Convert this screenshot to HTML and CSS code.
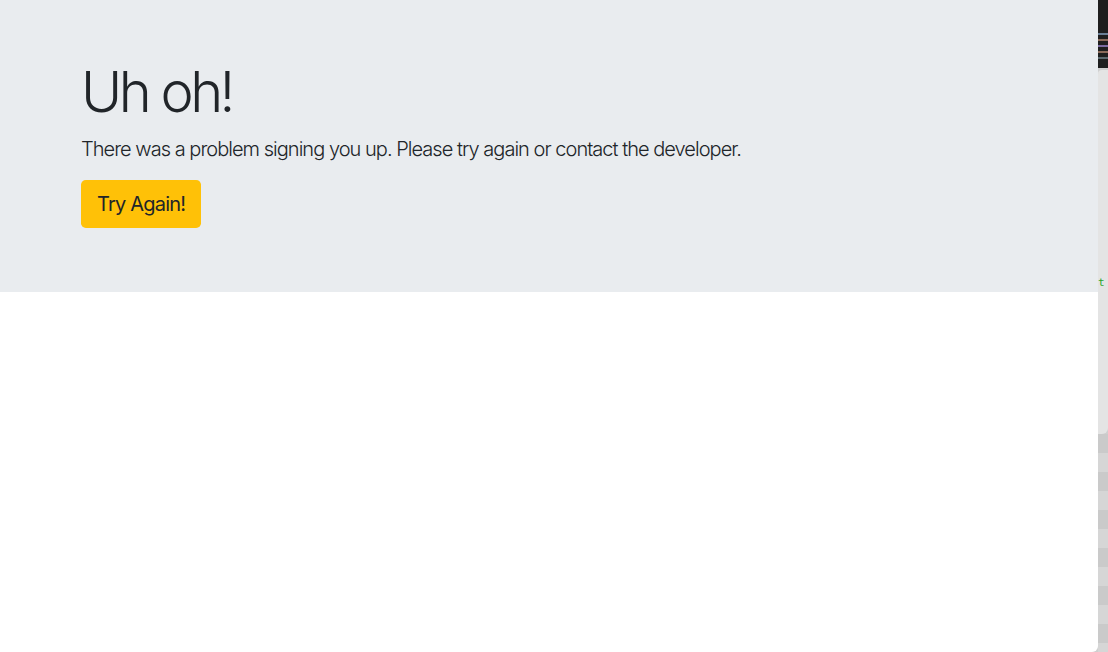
FILE: index.html
```html
<!DOCTYPE html>
<html lang="en">
<head>
<meta charset="utf-8">
<title>Uh oh!</title>
<link rel="stylesheet" href="styles.css">
</head>
<body>
<div class="screen">
  <main class="page">
    <section class="jumbotron">
      <h1 class="display">Uh oh!</h1>
      <p class="lead">There was a problem signing you up. Please try again or contact the developer.</p>
      <a class="btn-warning" href="#">Try Again!</a>
    </section>
  </main>
  <aside class="backdrop">
    <div class="backdrop-top">
      <span class="code-line c1"></span>
      <span class="code-line c2"></span>
      <span class="code-line c3"></span>
      <span class="code-line c4"></span>
      <span class="code-line c5"></span>
    </div>
    <div class="backdrop-panel">
      <span class="green-t">t</span>
    </div>
    <div class="backdrop-rows"></div>
  </aside>
</div>
</body>
</html>
```

FILE: styles.css
```css
* { box-sizing: border-box; }
html, body {
  margin: 0;
  height: 100%;
  overflow: hidden;
}
body {
  font-family: Inter, "Liberation Sans", sans-serif;
  color: #212529;
  background: #cfcfcf;
}
.screen {
  display: flex;
  height: 652px;
}
.page {
  width: 1098px;
  flex: none;
  background: #fff;
  border-bottom-right-radius: 6px;
  overflow: hidden;
}
.jumbotron {
  background: #e9ecef;
  padding: 59px 81px 64px;
}
.display {
  margin: 0 0 8px;
  font-size: 56px;
  font-weight: 300;
  line-height: 1.2;
  letter-spacing: -3.5px;
}
.lead {
  margin: 0 0 16px;
  font-size: 20px;
  font-weight: 300;
  line-height: 30px;
  letter-spacing: -0.97px;
}
.btn-warning {
  display: inline-block;
  background: #ffc107;
  color: #212529;
  text-decoration: none;
  font-size: 20px;
  font-weight: 400;
  line-height: 30px;
  letter-spacing: -0.8px;
  padding: 9px 16px;
  border-radius: 4.8px;
}
.backdrop {
  flex: 1;
  display: flex;
  flex-direction: column;
}
.backdrop-top {
  height: 68px;
  background: #1e1e1e;
  display: flex;
  flex-direction: column;
  gap: 4px;
  padding-top: 33px;
}
.code-line { display: block; height: 2px; width: 10px; }
.c1 { background: #6a7f96; }
.c2 { background: #8a6a5a; }
.c3 { background: #7a6aa0; }
.c4 { background: #8a6a5a; }
.c5 { background: #5c6a70; }
.backdrop-panel {
  height: 364px;
  background: #e4e4e4;
  border-top-left-radius: 4px;
  border-bottom-right-radius: 6px;
  position: relative;
  margin-top: 2px;
}
.green-t {
  position: absolute;
  top: 206px;
  left: 0;
  font-family: "DejaVu Sans Mono", monospace;
  font-size: 11px;
  color: #2aa52a;
}
.backdrop-rows {
  flex: 1;
  background: repeating-linear-gradient(#cacaca 0 19px, #d6d6d6 19px 38px);
}
```
